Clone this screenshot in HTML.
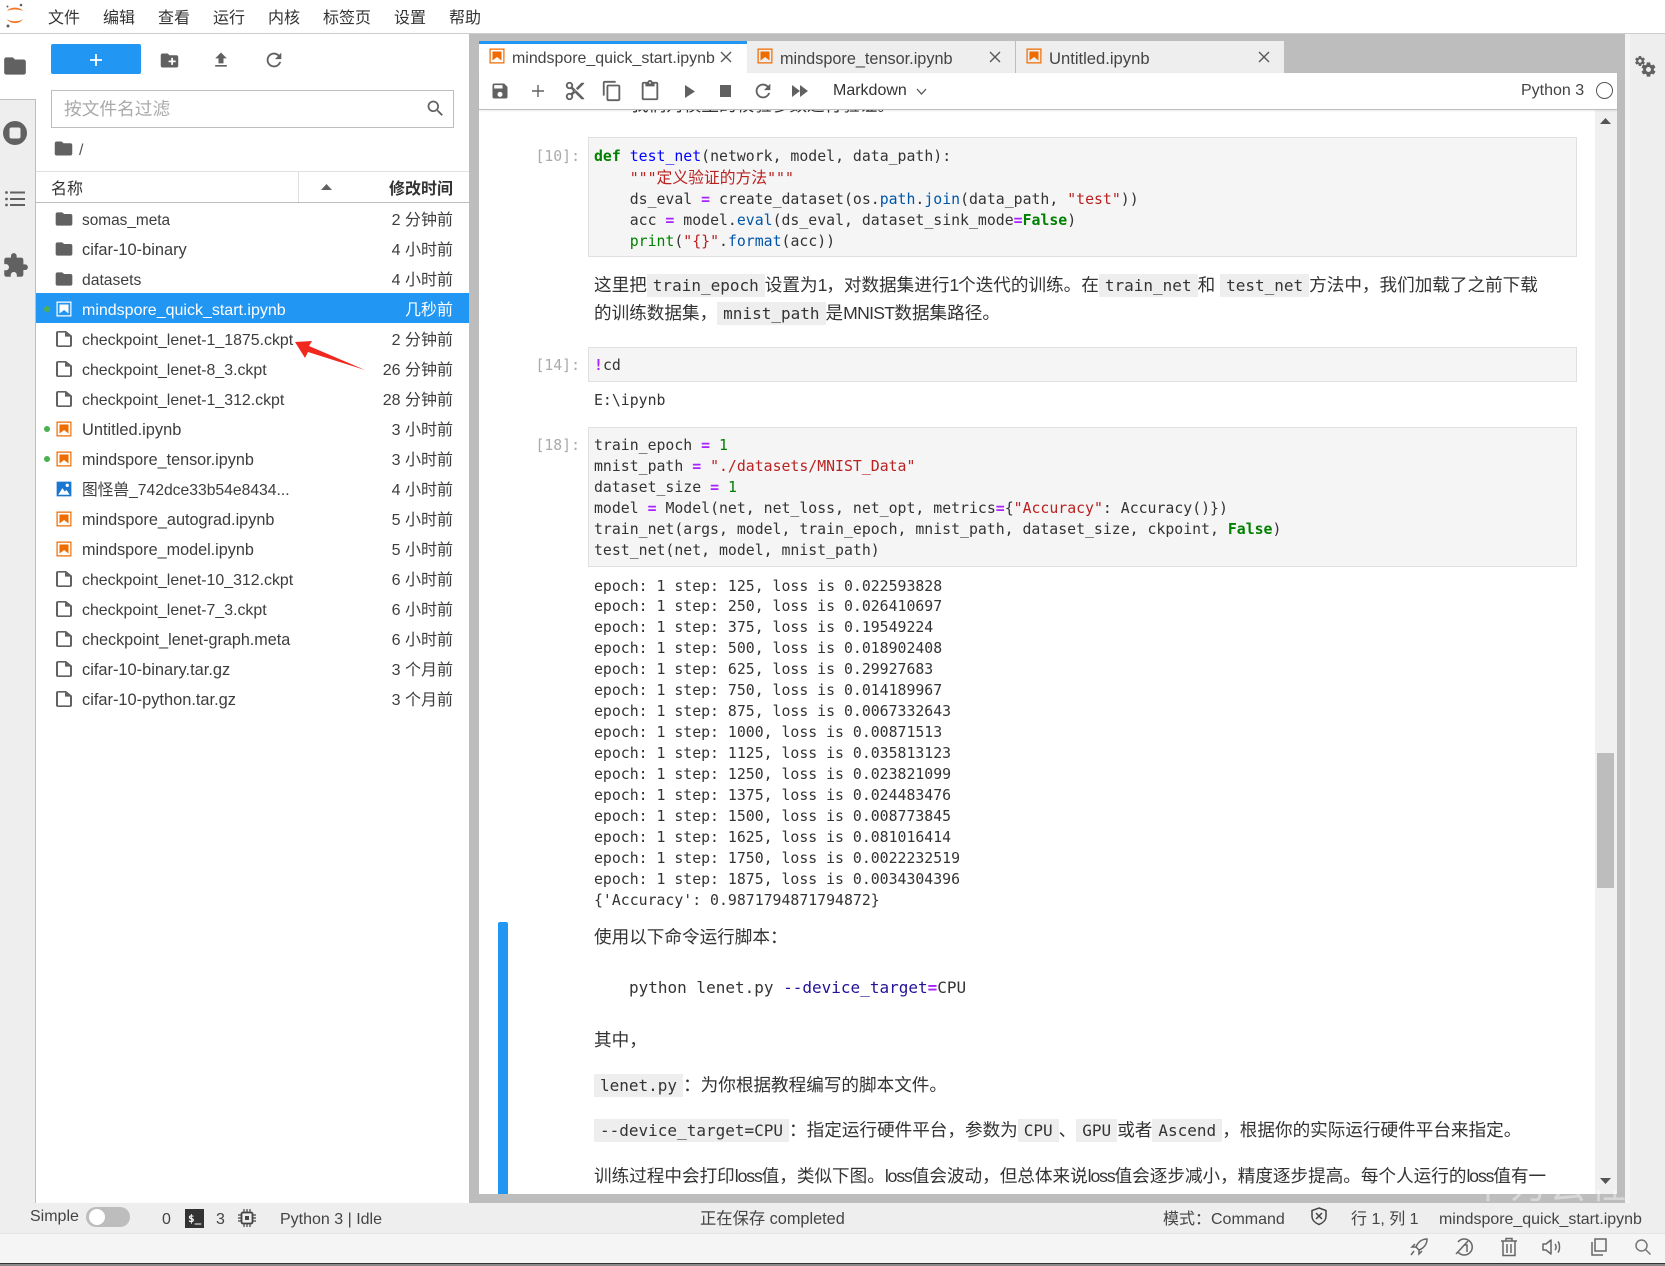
<!DOCTYPE html>
<html lang="zh"><head><meta charset="utf-8"><title>JupyterLab</title>
<style>
*{box-sizing:border-box}
html,body{margin:0;padding:0}
body{position:relative;width:1665px;height:1266px;overflow:hidden;background:#fff;font-family:"Liberation Sans","Noto Sans CJK SC",sans-serif;color:#333}
.a{position:absolute}
.t{position:absolute;white-space:nowrap}
.menu{top:8px;font-size:16px;line-height:22px;color:#333}
svg{position:absolute;display:block}
.row{position:absolute;left:36px;width:433px;height:30px;font-size:15.9px;line-height:30px;color:#3d3d3d}
.row .n{position:absolute;left:46px;top:3px;white-space:nowrap}
.row .n.u{top:2px}
.row .m{position:absolute;right:16px;top:2.5px;font-size:16px;white-space:nowrap}
.row svg{left:19px;top:7px;width:18px;height:18px}
.row svg.fo{left:18px;top:5.5px;width:20px;height:20px;fill:#616161}
.row svg.fi{left:20px;top:8px;width:16px;height:16px;fill:#616161}
.row .d{position:absolute;left:8px;top:13px;width:6px;height:6px;border-radius:50%;background:#4caf50}
.row.act{background:#2196f3;color:#fff}
pre{position:absolute;margin:0;font-family:"DejaVu Sans Mono","Noto Sans CJK SC",monospace;font-size:14.83px;line-height:21.1px;color:#333;white-space:pre}
.cell{position:absolute;left:588px;width:989px;background:#f5f5f5;border:1px solid #e0e0e0}
.pr{position:absolute;left:520px;width:60px;text-align:right;font-family:"DejaVu Sans Mono",monospace;font-size:14.8px;line-height:21px;color:#aaa}
.k{color:#008000;font-weight:bold}.f{color:#00f}.o{color:#a2f;font-weight:bold}.s{color:#ba2121}.b{color:#008000}.p{color:#05a}
.md{position:absolute;left:594px;font-size:17.6px;line-height:28px;white-space:nowrap;color:#333}
.md code{font-family:"DejaVu Sans Mono",monospace;font-size:16px;background:#eee;padding:2px 6px}
.l{letter-spacing:-1.1px}
.tab{position:absolute;top:41px;height:32px;background:#eee;border-right:1px solid #bdbdbd}
.tt{position:absolute;top:48px;font-size:15.95px;line-height:22px;color:#444;white-space:nowrap}
.st{position:absolute;top:1209px;font-size:16px;line-height:22px;color:#444;white-space:nowrap}
</style></head><body>
<svg width="0" height="0" style="position:absolute">
<defs>
<symbol id="folder" viewBox="0 0 24 24"><path d="M10 4H4c-1.1 0-1.99.9-1.99 2L2 18c0 1.1.9 2 2 2h16c1.1 0 2-.9 2-2V8c0-1.1-.9-2-2-2h-8l-2-2z"/></symbol>
<symbol id="file" viewBox="4 2 16 20" preserveAspectRatio="none"><path d="M14 2H6c-1.1 0-1.99.9-1.99 2L4 20c0 1.1.89 2 1.99 2H18c1.1 0 2-.9 2-2V8l-6-6zM6 20V4h7v5h5v11H6z"/></symbol>
<symbol id="nb" viewBox="0 0 22 22"><path fill="#ef6c00" d="M18.7 3.3v15.4H3.3V3.3h15.4m1.5-1.5H1.8v18.3h18.3l.1-18.3z"/><path fill="#ef6c00" d="M16.5 16.5l-5.4-4.3-5.6 4.3v-11h11z"/></symbol>
<symbol id="nbw" viewBox="0 0 22 22"><path fill="#fff" d="M18.7 3.3v15.4H3.3V3.3h15.4m1.5-1.5H1.8v18.3h18.3l.1-18.3z"/><path fill="#fff" d="M16.5 16.5l-5.4-4.3-5.6 4.3v-11h11z"/></symbol>
<symbol id="gear" viewBox="0 0 24 24"><path d="M19.43 12.98c.04-.32.07-.64.07-.98s-.03-.66-.07-.98l2.11-1.65c.19-.15.24-.42.12-.64l-2-3.46c-.12-.22-.39-.3-.61-.22l-2.49 1c-.52-.4-1.08-.73-1.69-.98l-.38-2.65C14.46 2.18 14.25 2 14 2h-4c-.25 0-.46.18-.49.42l-.38 2.65c-.61.25-1.17.59-1.69.98l-2.49-1c-.23-.09-.49 0-.61.22l-2 3.46c-.13.22-.07.49.12.64l2.11 1.65c-.04.32-.07.65-.07.98s.03.66.07.98l-2.11 1.65c-.19.15-.24.42-.12.64l2 3.46c.12.22.39.3.61.22l2.49-1c.52.4 1.08.73 1.69.98l.38 2.65c.03.24.24.42.49.42h4c.25 0 .46-.18.49-.42l.38-2.65c.61-.25 1.17-.59 1.69-.98l2.49 1c.23.09.49 0 .61-.22l2-3.46c.12-.22.07-.49-.12-.64l-2.11-1.65zM12 15.5c-1.93 0-3.5-1.57-3.5-3.5s1.57-3.5 3.5-3.5 3.5 1.57 3.5 3.5-1.57 3.5-3.5 3.5z"/></symbol>
</defs></svg>

<!-- backgrounds -->
<div class="a" style="left:0;top:0;width:1665px;height:34px;background:#fff;border-bottom:1px solid #ccc"></div>
<div class="a" style="left:0;top:34px;width:36px;height:1169px;background:#eee;border-right:1px solid #bdbdbd"></div>
<div class="a" style="left:0;top:34px;width:36px;height:65px;background:#fff"></div>
<div class="a" style="left:0;top:99px;width:36px;height:1px;background:#bdbdbd"></div>
<div class="a" style="left:36px;top:34px;width:433px;height:1169px;background:#fff"></div>
<div class="a" style="left:469px;top:34px;width:1156px;height:1169px;background:#bdbdbd"></div>
<div class="a" style="left:1625px;top:34px;width:40px;height:1169px;background:#eee;border-left:5px solid #f3f3f3"></div>

<!-- top menu -->
<svg style="left:4px;top:2px" width="22" height="28" viewBox="0 0 22 28"><path d="M3 9C6 4.5 16 4.500 19 9C15 7 7 7 3 9Z" fill="#f37726"/><path d="M3 17C6 22.500 16 22.500 19 17C15 20 7 20 3 17Z" fill="#f37726"/><circle cx="17" cy="3" r="1.300" fill="#616161"/><circle cx="3.500" cy="4.500" r="1" fill="#616161"/><circle cx="4" cy="24" r="1.500" fill="#616161"/></svg>
<span class="t menu" style="left:48px">文件</span><span class="t menu" style="left:103px">编辑</span><span class="t menu" style="left:158px">查看</span><span class="t menu" style="left:213px">运行</span><span class="t menu" style="left:268px">内核</span><span class="t menu" style="left:323px">标签页</span><span class="t menu" style="left:394px">设置</span><span class="t menu" style="left:449px">帮助</span>

<!-- rail icons -->
<svg style="left:2px;top:53px;fill:#616161" width="26" height="26"><use href="#folder"/></svg>
<svg style="left:3px;top:121px" width="24" height="24" viewBox="0 0 24 24"><circle cx="12" cy="12" r="12" fill="#616161"/><rect x="6.500" y="6.500" width="11" height="11" rx="2" fill="#eee"/></svg>
<svg style="left:5px;top:190px" width="20" height="18" viewBox="0 0 20 18" fill="#616161"><circle cx="1.500" cy="2.500" r="1.400"/><circle cx="1.500" cy="9" r="1.400"/><circle cx="1.500" cy="15" r="1.400"/><rect x="5" y="1.500" width="15" height="2"/><rect x="5" y="8" width="15" height="2"/><rect x="5" y="14" width="15" height="2"/></svg>
<svg style="left:2px;top:252px;fill:#616161" width="27" height="27" viewBox="0 0 24 24"><path d="M20.500 11H19V7c0-1.100-.9-2-2-2h-4V3.500C13 2.120 11.880 1 10.500 1S8 2.120 8 3.500V5H4c-1.100 0-1.990.9-1.990 2v3.800H3.500c1.490 0 2.700 1.210 2.700 2.700s-1.210 2.700-2.700 2.700H2V20c0 1.100.9 2 2 2h3.800v-1.500c0-1.490 1.210-2.700 2.700-2.700 1.490 0 2.700 1.210 2.700 2.700V22H17c1.100 0 2-.9 2-2v-4h1.500c1.380 0 2.500-1.120 2.500-2.500S21.880 11 20.500 11z"/></svg>

<!-- file browser toolbar -->
<div class="a" style="left:51px;top:44px;width:90px;height:30px;background:#2196f3;border-radius:2px"></div>
<svg style="left:89px;top:53px" width="14" height="14"><path d="M7 1v12M1 7h12" stroke="#fff" stroke-width="1.800"/></svg>
<svg style="left:159px;top:50px" width="21" height="21" viewBox="0 0 24 24"><path fill="#616161" d="M20 6h-8l-2-2H4c-1.100 0-1.990.9-1.990 2L2 18c0 1.100.9 2 2 2h16c1.100 0 2-.9 2-2V8c0-1.100-.9-2-2-2zm-1 8h-3v3h-2v-3h-3v-2h3V9h2v3h3v2z"/></svg>
<svg style="left:211px;top:50px;fill:#616161" width="20" height="20" viewBox="0 0 24 24"><path d="M9 16h6v-6h4l-7-7-7 7h4zm-4 2h14v2H5z"/></svg>
<svg style="left:263px;top:49px;fill:#616161" width="22" height="22" viewBox="0 0 24 24"><path d="M17.650 6.350C16.200 4.900 14.210 4 12 4c-4.420 0-7.990 3.580-7.990 8s3.570 8 7.990 8c3.730 0 6.840-2.550 7.730-6h-2.080c-.82 2.330-3.040 4-5.650 4-3.310 0-6-2.690-6-6s2.690-6 6-6c1.660 0 3.140.69 4.220 1.780L13 11h7V4l-2.350 2.350z"/></svg>
<div class="a" style="left:51px;top:90px;width:403px;height:38px;border:1px solid #bdbdbd"></div>
<span class="t" style="left:64px;top:96px;font-size:17.700px;line-height:26px;color:#aaa">按文件名过滤</span>
<svg style="left:425px;top:98px;fill:#616161" width="21" height="21" viewBox="0 0 24 24"><path d="M15.500 14h-.79l-.28-.27C15.410 12.590 16 11.110 16 9.500 16 5.910 13.090 3 9.500 3S3 5.910 3 9.500 5.910 16 9.500 16c1.610 0 3.090-.59 4.230-1.570l.27.28v.79l5 4.990L20.490 19l-4.990-5zm-6 0C7.010 14 5 11.990 5 9.500S7.010 5 9.500 5 14 7.010 14 9.500 11.990 14 9.500 14z"/></svg>
<svg style="left:53px;top:138px;fill:#616161" width="21" height="21"><use href="#folder"/></svg>
<span class="t" style="left:79px;top:140px;font-size:16px;line-height:22px;color:#555">/</span>

<!-- list header -->
<div class="a" style="left:36px;top:171px;width:433px;height:32px;border-top:1px solid #e0e0e0;border-bottom:1px solid #bdbdbd"></div>
<div class="a" style="left:298px;top:172px;width:1px;height:30px;background:#e0e0e0"></div>
<span class="t" style="left:51px;top:179px;font-size:16px;line-height:22px;color:#333">名称</span>
<svg style="left:321px;top:184px" width="11" height="6"><path d="M0 6L5.500 0L11 6Z" fill="#616161"/></svg>
<span class="t" style="right:1212px;top:179px;font-size:16px;line-height:22px;font-weight:bold;color:#333">修改时间</span>

<!-- rows -->
<div class="row" style="top:203px"><svg class="fo"><use href="#folder"/></svg><span class="n" style="font-size:15.4px">somas_meta</span><span class="m">2 分钟前</span></div>
<div class="row" style="top:233px"><svg class="fo"><use href="#folder"/></svg><span class="n u" style="font-size:16.4px">cifar-10-binary</span><span class="m">4 小时前</span></div>
<div class="row" style="top:263px"><svg class="fo"><use href="#folder"/></svg><span class="n" style="font-size:15.7px">datasets</span><span class="m">4 小时前</span></div>
<div class="row act" style="top:293px"><i class="d"></i><svg><use href="#nbw"/></svg><span class="n" style="font-size:16px">mindspore_quick_start.ipynb</span><span class="m">几秒前</span></div>
<div class="row" style="top:323px"><svg class="fi"><use href="#file"/></svg><span class="n">checkpoint_lenet-1_1875.ckpt</span><span class="m">2 分钟前</span></div>
<div class="row" style="top:353px"><svg class="fi"><use href="#file"/></svg><span class="n">checkpoint_lenet-8_3.ckpt</span><span class="m">26 分钟前</span></div>
<div class="row" style="top:383px"><svg class="fi"><use href="#file"/></svg><span class="n">checkpoint_lenet-1_312.ckpt</span><span class="m">28 分钟前</span></div>
<div class="row" style="top:413px"><i class="d"></i><svg><use href="#nb"/></svg><span class="n u" style="font-size:16.4px">Untitled.ipynb</span><span class="m">3 小时前</span></div>
<div class="row" style="top:443px"><i class="d"></i><svg><use href="#nb"/></svg><span class="n u" style="font-size:16.2px">mindspore_tensor.ipynb</span><span class="m">3 小时前</span></div>
<div class="row" style="top:473px"><svg viewBox="0 0 22 22"><path fill="#1976d2" d="M2 2h18v18H2z"/><path fill="#fff" d="M4 18l5-8 3 4 2-2 4 6z"/><circle cx="15" cy="6.500" r="2" fill="#fff"/></svg><span class="n" style="font-size:15.7px">图怪兽_742dce33b54e8434...</span><span class="m">4 小时前</span></div>
<div class="row" style="top:503px"><svg><use href="#nb"/></svg><span class="n u" style="font-size:16.25px">mindspore_autograd.ipynb</span><span class="m">5 小时前</span></div>
<div class="row" style="top:533px"><svg><use href="#nb"/></svg><span class="n u" style="font-size:16.2px">mindspore_model.ipynb</span><span class="m">5 小时前</span></div>
<div class="row" style="top:563px"><svg class="fi"><use href="#file"/></svg><span class="n">checkpoint_lenet-10_312.ckpt</span><span class="m">6 小时前</span></div>
<div class="row" style="top:593px"><svg class="fi"><use href="#file"/></svg><span class="n">checkpoint_lenet-7_3.ckpt</span><span class="m">6 小时前</span></div>
<div class="row" style="top:623px"><svg class="fi"><use href="#file"/></svg><span class="n u" style="font-size:16.15px">checkpoint_lenet-graph.meta</span><span class="m">6 小时前</span></div>
<div class="row" style="top:653px"><svg class="fi"><use href="#file"/></svg><span class="n u" style="font-size:16.4px">cifar-10-binary.tar.gz</span><span class="m">3 个月前</span></div>
<div class="row" style="top:683px"><svg class="fi"><use href="#file"/></svg><span class="n u" style="font-size:16.4px">cifar-10-python.tar.gz</span><span class="m">3 个月前</span></div>

<!-- red arrow -->
<svg style="left:290px;top:335px" width="80" height="40" viewBox="290 335 80 40"><path d="M295 342L312 341L309 346L365 370L308 352L305 358Z" fill="#f0281e"/></svg>

<!-- notebook white area -->
<div class="a" style="left:479px;top:109px;width:1116px;height:1085px;background:#fff;overflow:hidden">
<span class="t" style="left:152px;top:-18px;font-size:17.600px;line-height:28px;color:#333">我们对模型的校验参数进行验证。</span>
</div>
<div class="a" style="left:1595px;top:109px;width:22px;height:1085px;background:#f0f0f0"></div>
<div class="a" style="left:1597px;top:753px;width:17px;height:135px;background:#bdbdbd"></div>
<svg style="left:1600px;top:118px" width="11" height="6"><path d="M0 6L5.500 0L11 6Z" fill="#555"/></svg>
<svg style="left:1600px;top:1178px" width="11" height="6"><path d="M0 0L5.500 6L11 0Z" fill="#555"/></svg>

<!-- tabs -->
<div class="tab" style="left:479px;width:268px;height:32px;background:#fff;border-top:3px solid #2196f3;border-right:none"></div>
<div class="tab" style="left:747px;width:269px"></div>
<div class="tab" style="left:1016px;width:268px;border-right:none"></div>
<svg style="left:488px;top:47px" width="18" height="18"><use href="#nb"/></svg>
<span class="tt" style="left:512px">mindspore_quick_start.ipynb</span>
<svg style="left:720px;top:51px" width="12" height="12"><path d="M1 1L11 11M11 1L1 11" stroke="#555" stroke-width="1.300"/></svg>
<svg style="left:756px;top:47px" width="18" height="18"><use href="#nb"/></svg>
<span class="tt" style="left:780px;top:48px;font-size:16.25px">mindspore_tensor.ipynb</span>
<svg style="left:989px;top:51px" width="12" height="12"><path d="M1 1L11 11M11 1L1 11" stroke="#555" stroke-width="1.300"/></svg>
<svg style="left:1025px;top:47px" width="18" height="18"><use href="#nb"/></svg>
<span class="tt" style="left:1049px;top:48px;font-size:16.6px">Untitled.ipynb</span>
<svg style="left:1258px;top:51px" width="12" height="12"><path d="M1 1L11 11M11 1L1 11" stroke="#555" stroke-width="1.300"/></svg>

<!-- toolbar -->
<div class="a" style="left:479px;top:73px;width:1138px;height:37px;background:#fff;border-bottom:1px solid #bdbdbd;box-shadow:0 1px 2px rgba(0,0,0,.08)"></div>
<svg style="left:490px;top:81px;fill:#616161" width="20" height="20" viewBox="0 0 24 24"><path d="M17 3H5c-1.110 0-2 .9-2 2v14c0 1.100.89 2 2 2h14c1.100 0 2-.9 2-2V7l-4-4zm-5 16c-1.660 0-3-1.340-3-3s1.340-3 3-3 3 1.340 3 3-1.340 3-3 3zm3-10H5V5h10v4z"/></svg>
<svg style="left:531px;top:84px" width="14" height="14"><path d="M7 1v12M1 7h12" stroke="#616161" stroke-width="1.400"/></svg>
<svg style="left:564px;top:80px;fill:#616161" width="22" height="22" viewBox="0 0 24 24"><path d="M9.640 7.640c.23-.5.36-1.050.36-1.640 0-2.210-1.790-4-4-4S2 3.790 2 6s1.790 4 4 4c.59 0 1.140-.13 1.640-.36L10 12l-2.360 2.360C7.140 14.130 6.590 14 6 14c-2.210 0-4 1.790-4 4s1.790 4 4 4 4-1.790 4-4c0-.59-.13-1.140-.36-1.640L12 14l7 7h3v-1L9.640 7.640zM6 8c-1.100 0-2-.89-2-2s.9-2 2-2 2 .89 2 2-.9 2-2 2zm0 12c-1.100 0-2-.89-2-2s.9-2 2-2 2 .89 2 2-.9 2-2 2zm6-7.500c-.28 0-.5-.22-.5-.5s.22-.5.5-.5.5.22.5.5-.22.5-.5.5zM19 3l-6 6 2 2 7-7V3z"/></svg>
<svg style="left:601px;top:80px;fill:#616161" width="22" height="22" viewBox="0 0 24 24"><path d="M16 1H4c-1.100 0-2 .9-2 2v14h2V3h12V1zm3 4H8c-1.100 0-2 .9-2 2v14c0 1.100.9 2 2 2h11c1.100 0 2-.9 2-2V7c0-1.100-.9-2-2-2zm0 16H8V7h11v14z"/></svg>
<svg style="left:639px;top:80px;fill:#616161" width="22" height="22" viewBox="0 0 24 24"><path d="M19 2h-4.180C14.400.84 13.300 0 12 0c-1.300 0-2.400.84-2.820 2H5c-1.100 0-2 .9-2 2v16c0 1.100.9 2 2 2h14c1.100 0 2-.9 2-2V4c0-1.100-.9-2-2-2zm-7 0c.55 0 1 .45 1 1s-.45 1-1 1-1-.45-1-1 .45-1 1-1zm7 18H5V4h2v3h10V4h2v16z"/></svg>
<svg style="left:684px;top:85px" width="12" height="13"><path d="M1 0L11 6.500L1 13Z" fill="#616161"/></svg>
<div class="a" style="left:720px;top:85px;width:11px;height:12px;background:#616161"></div>
<svg style="left:752px;top:80px;fill:#616161" width="22" height="22" viewBox="0 0 24 24"><path d="M17.650 6.350C16.200 4.900 14.210 4 12 4c-4.420 0-7.990 3.580-7.990 8s3.570 8 7.990 8c3.730 0 6.840-2.550 7.730-6h-2.080c-.82 2.330-3.040 4-5.650 4-3.310 0-6-2.690-6-6s2.690-6 6-6c1.660 0 3.140.69 4.220 1.780L13 11h7V4l-2.350 2.350z"/></svg>
<svg style="left:792px;top:85px" width="16" height="12"><path d="M0 0L8 6L0 12ZM8 0L16 6L8 12Z" fill="#616161"/></svg>
<span class="t" style="left:833px;top:80px;font-size:16px;line-height:22px;color:#333">Markdown</span>
<svg style="left:916px;top:88px" width="11" height="8"><path d="M1 1L5.500 6L10 1" fill="none" stroke="#555" stroke-width="1.300"/></svg>
<span class="t" style="left:1521px;top:80px;font-size:16px;line-height:22px;color:#444">Python 3</span>
<div class="a" style="left:1596px;top:82px;width:17px;height:17px;border:1.500px solid #555;border-radius:50%"></div>

<!-- settings gears -->
<svg style="left:1634px;top:55px;fill:#616161" width="12" height="12"><use href="#gear"/></svg>
<svg style="left:1640px;top:61px;fill:#616161" width="17" height="17"><use href="#gear"/></svg>

<!-- cell 10 -->
<div class="pr" style="top:146px">[10]:</div>
<div class="cell" style="top:137px;height:120px"></div>
<pre style="left:594px;top:146px;line-height:21px"><span class="k">def</span> <span class="f">test_net</span>(network, model, data_path):
    <span class="s">"""<span style="font-size:15.800px">定义验证的方法</span>"""</span>
    ds_eval <span class="o">=</span> create_dataset(os.<span class="p">path</span>.<span class="p">join</span>(data_path, <span class="s">"test"</span>))
    acc <span class="o">=</span> model.<span class="p">eval</span>(ds_eval, dataset_sink_mode<span class="o">=</span><span class="k">False</span>)
    <span class="b">print</span>(<span class="s">"{}"</span>.<span class="p">format</span>(acc))</pre>
<div class="md" style="top:271px">这里把<code>train_epoch</code>设置为<span class="l">1</span>&#65292;对数据集进行<span class="l">1</span>个迭代的训练。在<code>train_net</code>和 <code>test_net</code>方法中&#65292;我们加载了之前下载</div>
<div class="md" style="top:299px">的训练数据集&#65292;<code>mnist_path</code>是<span style="letter-spacing:-.7px">MNIST</span>数据集路径。</div>

<!-- cell 14 -->
<div class="pr" style="top:355px">[14]:</div>
<div class="cell" style="top:347px;height:35px"></div>
<pre style="left:594px;top:355px"><span class="o">!</span>cd</pre>
<pre style="left:594px;top:390px">E:\ipynb</pre>

<!-- cell 18 -->
<div class="pr" style="top:435px">[18]:</div>
<div class="cell" style="top:427px;height:140px"></div>
<pre style="left:594px;top:434.500px">train_epoch <span class="o">=</span> <span class="b">1</span>
mnist_path <span class="o">=</span> <span class="s">"./datasets/MNIST_Data"</span>
dataset_size <span class="o">=</span> <span class="b">1</span>
model <span class="o">=</span> Model(net, net_loss, net_opt, metrics<span class="o">=</span>{<span class="s">"Accuracy"</span>: Accuracy()})
train_net(args, model, train_epoch, mnist_path, dataset_size, ckpoint, <span class="k">False</span>)
test_net(net, model, mnist_path)</pre>
<pre style="left:594px;top:576.500px;line-height:20.970px">epoch: 1 step: 125, loss is 0.022593828
epoch: 1 step: 250, loss is 0.026410697
epoch: 1 step: 375, loss is 0.19549224
epoch: 1 step: 500, loss is 0.018902408
epoch: 1 step: 625, loss is 0.29927683
epoch: 1 step: 750, loss is 0.014189967
epoch: 1 step: 875, loss is 0.0067332643
epoch: 1 step: 1000, loss is 0.00871513
epoch: 1 step: 1125, loss is 0.035813123
epoch: 1 step: 1250, loss is 0.023821099
epoch: 1 step: 1375, loss is 0.024483476
epoch: 1 step: 1500, loss is 0.008773845
epoch: 1 step: 1625, loss is 0.081016414
epoch: 1 step: 1750, loss is 0.0022232519
epoch: 1 step: 1875, loss is 0.0034304396
{'Accuracy': 0.9871794871794872}</pre>

<!-- markdown active cell -->
<div class="a" style="left:498px;top:922px;width:10px;height:272px;background:#2196f3;border-radius:2px 2px 0 0"></div>
<div class="md" style="top:923px">使用以下命令运行脚本&#65306;</div>
<pre style="left:629px;top:977px;font-size:16px;line-height:22px">python lenet.py <span style="color:#219">--device_target</span><span class="o">=</span>CPU</pre>
<div class="md" style="top:1026px">其中&#65292;</div>
<div class="md" style="top:1071px"><code>lenet.py</code>&#65306;为你根据教程编写的脚本文件。</div>
<div class="md" style="top:1116px"><code>--device_target=CPU</code>&#65306;指定运行硬件平台&#65292;参数为<code>CPU</code>、<code>GPU</code>或者<code>Ascend</code>&#65292;根据你的实际运行硬件平台来指定。</div>
<div class="md" style="top:1162px">训练过程中会打印<span class="l">loss</span>值&#65292;类似下图。<span class="l">loss</span>值会波动&#65292;但总体来说<span class="l">loss</span>值会逐步减小&#65292;精度逐步提高。每个人运行的<span class="l">loss</span>值有一</div>

<!-- watermark -->
<div class="a" style="left:1460px;top:1190px;width:166px;height:13px;overflow:hidden"><span class="t" style="left:10px;top:-24px;font-size:36px;line-height:40px;letter-spacing:4px;color:#fff;opacity:.4">华为云社区</span></div>

<!-- status bar -->
<div class="a" style="left:0;top:1203px;width:1665px;height:30px;background:#eee"></div>
<div class="a" style="left:0;top:1233px;width:1665px;height:30px;background:#f5f5f5;border-top:1px solid #e4e4e4"></div>
<div class="a" style="left:0;top:1263px;width:1665px;height:1px;background:#333"></div>
<div class="a" style="left:0;top:1264px;width:1665px;height:2px;background:#888"></div>
<span class="st" style="left:30px;top:1206px">Simple</span>
<div class="a" style="left:86px;top:1207px;width:44px;height:20px;background:#bdbdbd;border-radius:10px"></div>
<div class="a" style="left:89px;top:1209px;width:16px;height:16px;background:#fff;border-radius:50%"></div>
<span class="st" style="left:162px">0</span>
<div class="a" style="left:185px;top:1209px;width:19px;height:19px;background:#333"></div>
<span class="t" style="left:188px;top:1212px;font-family:'DejaVu Sans Mono',monospace;font-size:11px;line-height:14px;color:#fff;font-weight:bold">$_</span>
<span class="st" style="left:216px">3</span>
<svg style="left:238px;top:1209px" width="18" height="18" viewBox="0 0 18 18" fill="none" stroke="#444"><rect x="3.500" y="3.500" width="11" height="11" rx="1.500" stroke-width="1.800"/><rect x="7" y="7" width="4" height="4" fill="#444" stroke="none"/><path d="M6 0v3M9 0v3M12 0v3M6 15v3M9 15v3M12 15v3M0 6h3M0 9h3M0 12h3M15 6h3M15 9h3M15 12h3" stroke-width="1.200"/></svg>
<span class="st" style="left:280px">Python 3 | Idle</span>
<span class="st" style="left:700px;top:1208px;font-size:16.3px">正在保存 completed</span>
<span class="st" style="left:1163px">模式&#65306;Command</span>
<svg style="left:1309px;top:1206px" width="20" height="20" viewBox="0 0 20 20" fill="none" stroke="#444" stroke-width="1.500"><path d="M10 2L17 4.500V10C17 14 14 17 10 18.500C6 17 3 14 3 10V4.500Z"/><path d="M7 7L13 13M13 7L7 13"/></svg>
<span class="st" style="left:1351px">行 1, 列 1</span>
<span class="st" style="left:1439px;font-size:15.950px">mindspore_quick_start.ipynb</span>

<!-- bottom icons -->
<svg style="left:1408px;top:1236px" width="22" height="22" viewBox="0 0 22 22" fill="none" stroke="#666" stroke-width="1.500"><path d="M19 3C14 3 10 6 8 11L11 14C16 12 19 8 19 3Z"/><path d="M8 11L4 11L7 8M11 14V18L14 15M6 15L3 19"/></svg>
<svg style="left:1453px;top:1236px" width="22" height="22" viewBox="0 0 22 22" fill="none" stroke="#666" stroke-width="1.500"><path d="M5 6A8 8 0 1 1 5 16M3 18L15 5M11 9H14V16"/></svg>
<svg style="left:1500px;top:1237px" width="18" height="20" viewBox="0 0 18 20" fill="none" stroke="#666" stroke-width="1.500"><path d="M1 4H17M6 4V1.500H12V4M3 4V18.500H15V4M7 7V16M11 7V16"/></svg>
<svg style="left:1541px;top:1237px" width="22" height="20" viewBox="0 0 22 20" fill="none" stroke="#666" stroke-width="1.500"><path d="M2 7V13H5L10 17V3L5 7ZM14 7C15.500 8.500 15.500 11.500 14 13M17 4.500C19 7 19 13 17 15.500" stroke-linejoin="round"/></svg>
<svg style="left:1590px;top:1237px" width="18" height="20" viewBox="0 0 18 20" fill="none" stroke="#666" stroke-width="1.500"><path d="M5 2H16V14H5ZM2 5V18H13"/></svg>
<svg style="left:1634px;top:1238px" width="18" height="18" viewBox="0 0 18 18" fill="none" stroke="#777" stroke-width="1.500"><circle cx="7.500" cy="7.500" r="5.500"/><path d="M11.500 11.500L16.500 16.500"/></svg>
</body></html>
